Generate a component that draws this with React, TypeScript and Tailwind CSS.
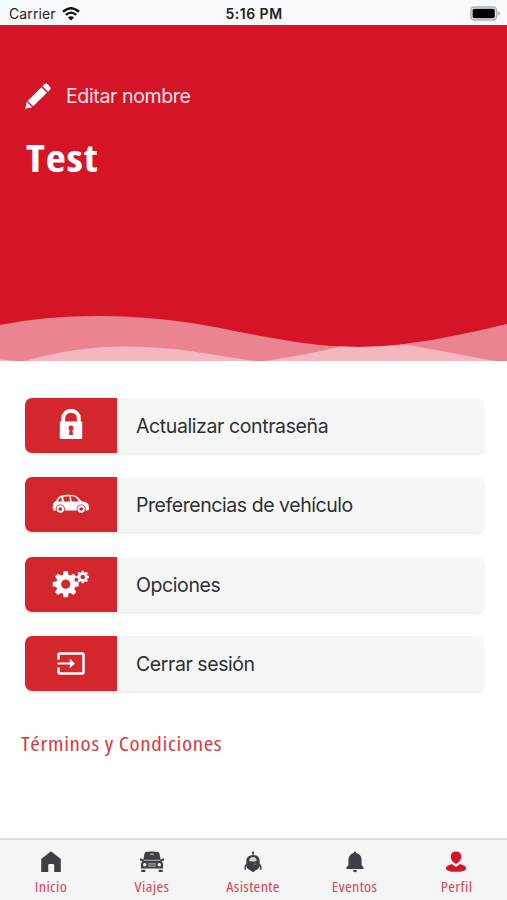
import type { ReactNode } from "react";

type TMenuItem = {
  label: string;
  icon: ReactNode;
  textClass: string;
};

type TTab = {
  label: string;
  icon: ReactNode;
};

const PencilIcon = () => (
  <svg width="26" height="26" viewBox="0 0 26 26" fill="#fff">
    <path d="M0.3 25.7L1.7 18.8L7.2 24.3Z" />
    <path d="M2.6 17.9L16.3 4.2L21.9 9.8L8.2 23.3Z" />
    <path d="M17.4 3.2L19.4 1.2Q21 -0.2 22.5 1.2L25 3.7Q26.3 5.2 25 6.7L23 8.8Z" />
  </svg>
);

const WifiIcon = () => (
  <svg width="18" height="14" viewBox="0 0 18 14" fill="none" stroke="#111">
    <path d="M1 4.7Q9 -2.2 17 4.7" strokeWidth="2.5" />
    <path d="M3.8 7.8Q9 3.4 14.2 7.8" strokeWidth="2.3" />
    <path d="M9 13.6L5.9 10.4Q9 7.9 12.1 10.4Z" fill="#111" stroke="none" />
  </svg>
);

const BatteryIcon = () => (
  <svg width="31" height="15" viewBox="0 0 31 15">
    <rect x="0.9" y="0.9" width="25.7" height="13.2" rx="3.8" fill="#f4f6f7" stroke="#adafb0" strokeWidth="1.5" />
    <rect x="2.6" y="2.8" width="22.2" height="9.4" rx="1.8" fill="#000" />
    <path d="M28 5.2Q30.2 6 30.2 7.5Q30.2 9 28 9.8Z" fill="#adafb0" />
  </svg>
);

const LockIcon = () => (
  <svg className="mb-[2px]" width="24" height="31" viewBox="0 0 24 31">
    <path d="M4.2 14V9A7.8 7.3 0 0 1 19.8 9V14" fill="none" stroke="#fff" strokeWidth="3.9" />
    <rect x="0.8" y="12.6" width="22.4" height="17.4" rx="1" fill="#fff" />
    <circle cx="12" cy="19" r="2.5" fill="#d4262d" />
    <path d="M10.8 20H13.2L14 26H10Z" fill="#d4262d" />
  </svg>
);

const CarIcon = () => (
  <svg width="38" height="20" viewBox="0 0 38 20">
    <path
      d="M1 16.5Q0.3 11 1.7 8.5L4 7Q6 3 8 2Q16 -0.4 23.5 1.7Q26 2.7 29.5 7.2Q35 7.8 36.3 10.3Q37 12 37 14.3Q37.5 16.5 35.5 16.5Z"
      fill="#fff"
    />
    <path d="M5.8 7.4Q7.5 3.5 9.3 3.1L10 7.4ZM11.2 2.8Q14 2.2 17.3 2.2L18 7.4H11.8ZM18.8 2.2Q22.5 2.3 23.5 3.1L27 7.4H19.7Z" fill="#d4262d" />
    <circle cx="8.3" cy="15" r="4.6" fill="#d4262d" />
    <circle cx="29.2" cy="15" r="4.6" fill="#d4262d" />
    <circle cx="8.3" cy="15" r="2.8" fill="none" stroke="#fff" strokeWidth="1.9" />
    <circle cx="29.2" cy="15" r="2.8" fill="none" stroke="#fff" strokeWidth="1.9" />
  </svg>
);

const Gear = () => (
  <>
    <circle r="7.2" fill="none" stroke="#fff" strokeWidth="5.2" />
    {[0, 45, 90, 135, 180, 225, 270, 315].map((angle) => (
      <path key={angle} d="M-3 -8.7L-2.1 -13H2.1L3 -8.7Z" fill="#fff" transform={`rotate(${angle})`} />
    ))}
  </>
);

const GearsIcon = () => (
  <svg width="38" height="28" viewBox="0 0 38 28">
    <g transform="translate(13.7 14.2)">
      <Gear />
    </g>
    <g transform="translate(30.7 7) scale(0.49)">
      <Gear />
    </g>
  </svg>
);

const ExitIcon = () => (
  <svg width="28" height="23" viewBox="0 0 28 23" fill="none" stroke="#fff">
    <path
      d="M1.5 7.5V2.6Q1.5 1.4 2.7 1.4H25.3Q26.5 1.4 26.5 2.6V20.4Q26.5 21.6 25.3 21.6H2.7Q1.5 21.6 1.5 20.4V15.5"
      strokeWidth="2.5"
    />
    <path d="M0.5 11.5H14" strokeWidth="2.2" />
    <path d="M12.8 6.8L18 11.5L12.8 16.2Z" fill="#fff" stroke="none" />
  </svg>
);

const HomeIcon = () => (
  <svg width="22" height="22" viewBox="0 0 22 22" fill="#3c3f45">
    <path d="M11 0.3L20.8 8V21H14.2V14Q14.2 13 13.2 13H9.3Q8.3 13 8.3 14V21H1.2V8Z" />
  </svg>
);

const FrontCarIcon = () => (
  <svg width="26" height="22" viewBox="0 0 26 22">
    <path d="M6.5 1Q13 0 19.5 1Q20.7 1.8 21.5 8.5L25 7.3V9.6L22.8 10.2Q24.5 12 24 17.6H2Q1.5 12 3.2 10.2L1 9.6V7.3L4.5 8.5Q5.3 1.8 6.5 1Z" fill="#3c3f45" />
    <path d="M11 3.2H15" stroke="#ccc" strokeWidth="1" />
    <path d="M4.5 9.3H21.5" stroke="#b8bbbc" strokeWidth="0.9" />
    <path d="M9.2 12H16.8V15.8H9.2Z" fill="#a6a9ab" />
    <path d="M9.5 13.2H16.5M9.5 14.6H16.5" stroke="#3c3f45" strokeWidth="0.6" />
    <circle cx="5.7" cy="13.8" r="1.7" fill="#f2f4f4" />
    <circle cx="20.3" cy="13.8" r="1.7" fill="#f2f4f4" />
    <path d="M2.3 18.7H6.3V21H2.3ZM19.7 18.7H23.7V21H19.7Z" fill="#3c3f45" />
  </svg>
);

const AssistantIcon = () => (
  <svg width="18" height="22" viewBox="0 0 18 22">
    <path d="M9 0.5V6" stroke="#3c3f45" strokeWidth="1.1" />
    <circle cx="9" cy="1.8" r="1.1" fill="#3c3f45" />
    <path d="M2.3 14V10.5Q2.3 4 9 4Q15.7 4 15.7 10.5V14Q15.7 17.8 12 19L9 21.3L6 19Q2.3 17.8 2.3 14Z" fill="#3c3f45" />
    <path d="M5 9.6Q5.8 6 9 6Q12.2 6 13 9.6L11 10.5H7Z" fill="#cfd2d4" />
    <path d="M2.6 13L1.3 15.5V18.8M15.4 13L16.7 15.5V18.8" fill="none" stroke="#3c3f45" strokeWidth="1.5" />
    <path d="M9 13.2H12.5" stroke="#7b7f84" strokeWidth="0.8" />
  </svg>
);

const BellIcon = () => (
  <svg width="20" height="22" viewBox="0 0 20 22" fill="#3c3f45">
    <path d="M8.8 2V1.2Q8.8 0.4 10 0.4Q11.2 0.4 11.2 1.2V2Q16 3.1 16.6 8.4V14.2L18.5 16.2V18H1.5V16.2L3.4 14.2V8.4Q4 3.1 8.8 2Z" />
    <path d="M8 19H12Q11.8 21.3 10 21.3Q8.2 21.3 8 19Z" />
  </svg>
);

const ProfileIcon = () => (
  <svg width="22" height="22" viewBox="0 0 22 22" fill="#d61428">
    <path d="M11 0.5Q16.2 0.5 16.2 5.7Q16.2 8.7 13.8 11L11 13L8.2 11Q5.8 8.7 5.8 5.7Q5.8 0.5 11 0.5Z" />
    <path d="M0.8 17.7Q0.8 14.7 6.8 13L11 16L15.2 13Q21.2 14.7 21.2 17.7Q20.5 20.8 11 20.8Q1.5 20.8 0.8 17.7Z" />
  </svg>
);

const menuItems: TMenuItem[] = [
  { label: "Actualizar contraseña", icon: <LockIcon />, textClass: "tracking-[-0.4px]" },
  { label: "Preferencias de vehículo", icon: <CarIcon />, textClass: "tracking-[-0.44px]" },
  { label: "Opciones", icon: <GearsIcon />, textClass: "tracking-[-0.4px]" },
  { label: "Cerrar sesión", icon: <ExitIcon />, textClass: "tracking-[-0.43px]" },
];

const tabs: TTab[] = [
  { label: "Inicio", icon: <HomeIcon /> },
  { label: "Viajes", icon: <FrontCarIcon /> },
  { label: "Asistente", icon: <AssistantIcon /> },
  { label: "Eventos", icon: <BellIcon /> },
  { label: "Perfil", icon: <ProfileIcon /> },
];

function App() {
  return (
    <div className="flex h-[900px] w-[507px] flex-col overflow-hidden bg-white font-['Inter',sans-serif]">
      <div className="grid h-[25px] shrink-0 grid-cols-3 items-center bg-[#f7fafc] pl-[9px] pr-[6px] text-[14px] text-[#222]">
        <div className="flex items-center gap-[6px] pt-[2px]">
          <span className="tracking-[0.1px]">Carrier</span>
          <WifiIcon />
        </div>
        <span className="-ml-[2px] pt-[2px] text-center font-semibold tracking-[0.5px]">5:16 PM</span>
        <div className="flex justify-end pt-[1px]">
          <BatteryIcon />
        </div>
      </div>

      <header className="flex h-[336px] shrink-0 flex-col bg-[#d61428] text-white">
        <button type="button" className="flex items-center gap-[15px] pl-[25px] pt-[58px] text-left">
          <PencilIcon />
          <span className="text-[19.5px] leading-[26px] tracking-[-0.37px] text-[#fbe4e7]">
            Editar nombre
          </span>
        </button>
        <h1 className="origin-left scale-x-[1.17] self-start ml-[26px] mt-[23px] font-['Open_Sans',sans-serif] text-[37.5px] font-bold leading-[52px] tracking-[0.7px] [font-stretch:75%]">
          Test
        </h1>
        <svg className="mt-auto block" width="507" height="46" viewBox="0 0 507 46">
          <path d="M0 10C65 -3 145 -2 220 13C270 23 315 32 357 32C407 32 460 20 507 9V46H0Z" fill="#e98490" />
          <path d="M25 46C80 30 130 28 190 36L254 46Z" fill="#f4b7bf" />
          <path d="M265 46Q310 39 340 31.5Q374 33 406 29.5L495 46Z" fill="#f4b7bf" />
          <path d="M0 44.5L18 46H0Z" fill="#f4b7bf" />
        </svg>
      </header>

      <main className="flex flex-1 flex-col pl-[25px] pr-[22px] pt-[37px]">
        <div className="flex flex-col gap-[24.4px]">
          {menuItems.map((item) => (
            <button
              key={item.label}
              type="button"
              className="flex h-[55px] w-[459px] overflow-hidden rounded-[7px] bg-[#f5f7f7] text-left shadow-[0_2px_3px_rgba(0,0,0,0.08)]"
            >
              <span className="flex w-[92px] items-center justify-center bg-[#d4262d]">
                <span className="mb-[1px]">{item.icon}</span>
              </span>
              <span className={`self-center pl-[19px] pt-[2px] text-[19.5px] text-[#2d2f31] ${item.textClass}`}>
                {item.label}
              </span>
            </button>
          ))}
        </div>
        <a className="-ml-[4px] mt-[38px] origin-left scale-x-[1.12] self-start font-['Open_Sans',sans-serif] text-[20.5px] leading-[28px] tracking-[0.6px] text-[#d73a42] [font-stretch:75%]">
          Términos y Condiciones
        </a>
      </main>

      <nav className="grid h-[62px] shrink-0 grid-cols-5 border-t-2 border-[#dcdedf] bg-[#f3f5f6]">
        {tabs.map((tab) => (
          <button key={tab.label} type="button" className="flex flex-col items-center pt-[11px]">
            {tab.icon}
            <span className="mt-[5px] scale-x-[1.16] font-['Open_Sans',sans-serif] text-[14px] leading-[18px] tracking-[0.3px] text-[#dc4850] [font-stretch:75%]">
              {tab.label}
            </span>
          </button>
        ))}
      </nav>
    </div>
  );
}

export default App;
